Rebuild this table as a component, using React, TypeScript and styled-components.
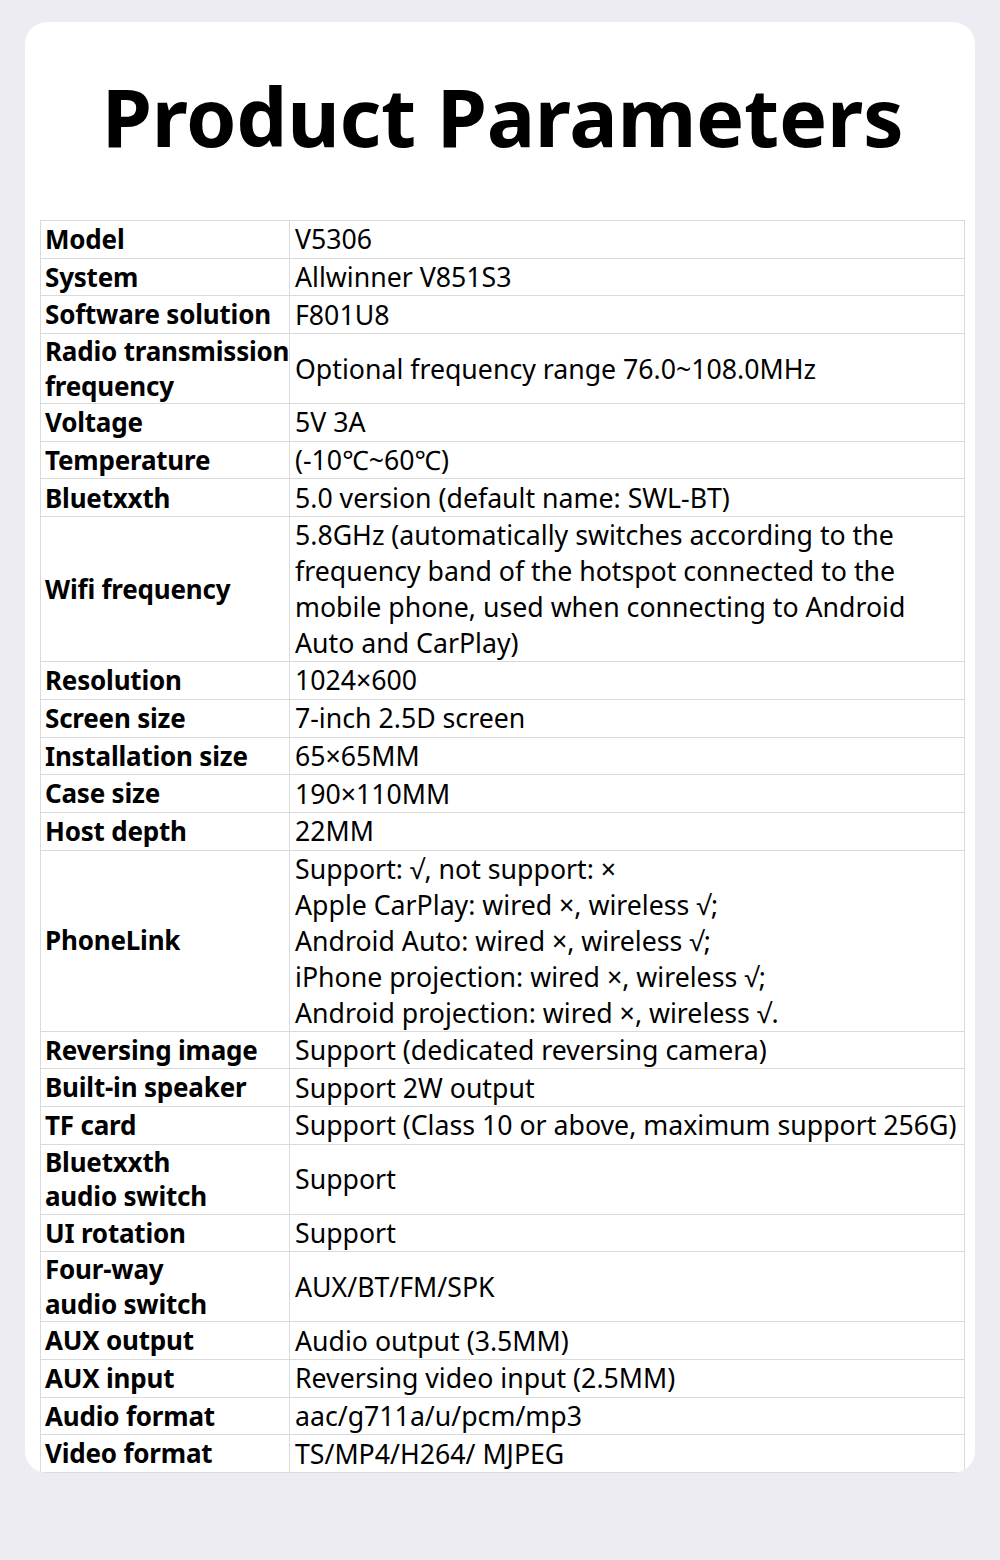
import styled, { createGlobalStyle } from "styled-components";

const GlobalStyle = createGlobalStyle`
  html, body {
    margin: 0;
    padding: 0;
    background: #ececf2;
  }
  body {
    font-family: "Noto Sans", "Open Sans", sans-serif;
    color: #000;
  }
`;

type Row = { label: string[]; value: string[] };

const rows: Row[] = [
  { label: ["Model"], value: ["V5306"] },
  { label: ["System"], value: ["Allwinner V851S3"] },
  { label: ["Software solution"], value: ["F801U8"] },
  { label: ["Radio transmission", "frequency"], value: ["Optional frequency range 76.0~108.0MHz"] },
  { label: ["Voltage"], value: ["5V 3A"] },
  { label: ["Temperature"], value: ["(-10℃~60℃)"] },
  { label: ["Bluetxxth"], value: ["5.0 version (default name: SWL-BT)"] },
  {
    label: ["Wifi frequency"],
    value: [
      "5.8GHz (automatically switches according to the",
      "frequency band of the hotspot connected to the",
      "mobile phone, used when connecting to Android",
      "Auto and CarPlay)",
    ],
  },
  { label: ["Resolution"], value: ["1024×600"] },
  { label: ["Screen size"], value: ["7-inch 2.5D screen"] },
  { label: ["Installation size"], value: ["65×65MM"] },
  { label: ["Case size"], value: ["190×110MM"] },
  { label: ["Host depth"], value: ["22MM"] },
  {
    label: ["PhoneLink"],
    value: [
      "Support: √, not support: ×",
      "Apple CarPlay: wired ×, wireless √;",
      "Android Auto: wired ×, wireless √;",
      "iPhone projection: wired ×, wireless √;",
      "Android projection: wired ×, wireless √.",
    ],
  },
  { label: ["Reversing image"], value: ["Support (dedicated reversing camera)"] },
  { label: ["Built-in speaker"], value: ["Support 2W output"] },
  { label: ["TF card"], value: ["Support (Class 10 or above, maximum support 256G)"] },
  { label: ["Bluetxxth", "audio switch"], value: ["Support"] },
  { label: ["UI rotation"], value: ["Support"] },
  { label: ["Four-way", "audio switch"], value: ["AUX/BT/FM/SPK"] },
  { label: ["AUX output"], value: ["Audio output (3.5MM)"] },
  { label: ["AUX input"], value: ["Reversing video input (2.5MM)"] },
  { label: ["Audio format"], value: ["aac/g711a/u/pcm/mp3"] },
  { label: ["Video format"], value: ["TS/MP4/H264/ MJPEG"] },
];

const Page = styled.div`
  padding: 22px 25px 90px;
`;

const Card = styled.div`
  background: #fff;
  border-radius: 22px;
  padding: 0 10px 0 15px;
  overflow: hidden;
`;

const Title = styled.h1`
  margin: 0;
  padding: 42px 0 52px;
  text-align: center;
  font-size: 81px;
  line-height: 104px;
  font-weight: 700;
  letter-spacing: -0.3px;
`;

const Table = styled.table`
  width: 100%;
  border-collapse: collapse;
  table-layout: fixed;
`;

const LabelCell = styled.td`
  width: 242px;
  border: 1px solid #dadada;
  padding: 0 2px 0 4px;
  height: 36.7px;
  vertical-align: middle;
  white-space: nowrap;
  font-size: 26px;
  font-weight: 700;
  letter-spacing: -0.2px;
  line-height: 34.5px;
`;

const ValueCell = styled.td`
  border: 1px solid #dadada;
  padding: 0 5px;
  height: 36.7px;
  vertical-align: middle;
  white-space: nowrap;
  font-size: 26.7px;
  font-weight: 400;
  line-height: 36px;
`;

const Line = styled.div`
  display: block;
`;

export default function App() {
  return (
    <>
      <GlobalStyle />
      <Page>
        <Card>
          <Title>Product Parameters</Title>
          <Table>
            <tbody>
              {rows.map((r) => (
                <tr key={r.label.join(" ")}>
                  <LabelCell>
                    {r.label.map((l) => (
                      <Line key={l}>{l}</Line>
                    ))}
                  </LabelCell>
                  <ValueCell>
                    {r.value.map((v) => (
                      <Line key={v}>{v}</Line>
                    ))}
                  </ValueCell>
                </tr>
              ))}
            </tbody>
          </Table>
        </Card>
      </Page>
    </>
  );
}
